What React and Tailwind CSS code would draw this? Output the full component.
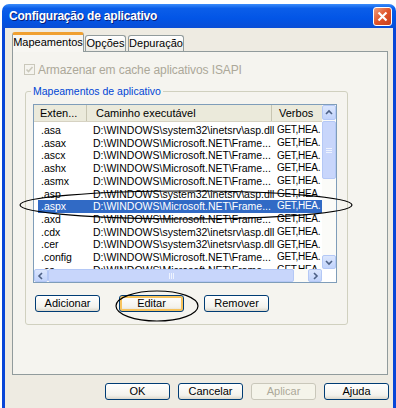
import { useState } from "react";

const MS = "D:\\WINDOWS\\Microsoft.NET\\Frame...";
const SYS = "D:\\WINDOWS\\system32\\inetsrv\\asp.dll";

const rows = [
  [".asa", SYS],
  [".asax", MS],
  [".ascx", MS],
  [".ashx", MS],
  [".asmx", MS],
  [".asp", SYS],
  [".aspx", MS],
  [".axd", MS],
  [".cdx", SYS],
  [".cer", SYS],
  [".config", MS],
  [".cs", MS],
];

const Arrow = ({ dir }) => {
  const d = {
    up: "M2 6 L5 3 L8 6",
    down: "M2 4 L5 7 L8 4",
    left: "M6 2 L3 5 L6 8",
    right: "M4 2 L7 5 L4 8",
  }[dir];
  return (
    <svg width="10" height="10" viewBox="0 0 10 10">
      <path d={d} fill="none" stroke="#4d6185" strokeWidth="1.6" />
    </svg>
  );
};

const ScrollBtn = ({ dir, className = "" }) => (
  <div
    className={`flex items-center justify-center rounded-[2px] border border-[#b4c8f6] bg-[linear-gradient(#dbe6fd,#c1d3fb)] ${className}`}
  >
    <Arrow dir={dir} />
  </div>
);

const XpButton = ({ label, focused, disabled, className = "" }) => (
  <button
    className={`h-[17px] w-[65px] rounded-[3px] border text-[11px] leading-none ${
      disabled
        ? "border-[#c9c7ba] bg-[#f5f4ea] text-[#aca899]"
        : "border-[#003c74] bg-[linear-gradient(#ffffff,#f3f2ec_75%,#dcd8cc)] text-black"
    } ${focused ? "shadow-[inset_0_0_0_2px_#f7c35c]" : ""} ${className}`}
  >
    {label}
  </button>
);

const ListView = () => {
  const [selected] = useState(6);
  return (
    <div className="flex h-[179px] w-[304px] flex-col border border-[#7f9db9] bg-white">
      <div className="flex h-[164px]">
        <div className="flex w-[288px] flex-col overflow-hidden">
          <div className="flex h-[17px] shrink-0 items-center border-b border-[#d6d2c2] bg-[#ebeadb]">
            <div className="flex h-full w-[53px] items-center border-r border-[#c7c5b2] pl-[6px]">
              Exten...
            </div>
            <div className="flex h-full w-[185px] items-center border-r border-[#c7c5b2] pl-[9px]">
              Caminho executável
            </div>
            <div className="flex h-full w-[50px] items-center pl-[7px]">Verbos</div>
          </div>
          <div className="pt-[2px] text-[10.5px]">
            {rows.map(([ext, path], i) => (
              <div key={ext} className="flex h-[12.7px] items-center">
                <div
                  className={`ml-[4px] flex h-full flex-1 items-center ${
                    i === selected ? "bg-[#316ac5] text-white" : ""
                  }`}
                >
                  <span className="w-[49px] pl-[3px]">{ext}</span>
                  <span className="w-[185px] pl-[6px] whitespace-nowrap">{path}</span>
                  <span className="pl-[5px] text-[10px] tracking-[-0.3px] whitespace-nowrap">GET,HEA.</span>
                </div>
              </div>
            ))}
          </div>
        </div>
        <div className="flex w-[14px] flex-col bg-[#fbfbf8]">
          <ScrollBtn dir="up" className="h-[15px]" />
          <div className="mt-[1px] flex h-[58px] items-center justify-center rounded-[2px] border border-[#b4c8f6] bg-[#c8d6fb]">
            <div className="flex flex-col gap-[1px]">
              <div className="h-px w-[6px] bg-[#eef3fe]" />
              <div className="h-px w-[6px] bg-[#eef3fe]" />
              <div className="h-px w-[6px] bg-[#eef3fe]" />
            </div>
          </div>
          <div className="flex-1" />
          <ScrollBtn dir="down" className="h-[14px]" />
        </div>
      </div>
      <div className="flex h-[13px]">
        <div className="flex w-[288px] bg-[#fbfbf8]">
          <ScrollBtn dir="left" className="w-[14px]" />
          <div className="flex w-[246px] items-center justify-center rounded-[2px] border border-[#b4c8f6] bg-[#c8d6fb]">
            <div className="flex gap-[1px]">
              <div className="h-[6px] w-px bg-[#eef3fe]" />
              <div className="h-[6px] w-px bg-[#eef3fe]" />
              <div className="h-[6px] w-px bg-[#eef3fe]" />
            </div>
          </div>
          <div className="flex-1" />
          <ScrollBtn dir="right" className="w-[14px]" />
        </div>
        <div className="w-[14px] bg-white" />
      </div>
    </div>
  );
};

export default function App() {
  return (
    <div className="relative h-[408px] w-[396px] overflow-hidden bg-white font-['Liberation_Sans',Arial,sans-serif] text-[11px] leading-none text-black">
      <div className="ml-[2px] mt-[4px] flex h-[404px] w-[394px] flex-col">
        {/* title bar */}
        <div className="flex h-[24px] shrink-0 items-center justify-between rounded-t-[7px] bg-[linear-gradient(#3a8cfb,#0b5ee9_18%,#0255e6_60%,#0a4ed6)] pl-[7px] pr-[4px]">
          <span className="text-[12px] font-bold tracking-[-0.2px] text-white [text-shadow:1px_1px_#0a1e7a]">
            Configuração de aplicativo
          </span>
          <div className="flex h-[19px] w-[19px] items-center justify-center rounded-[3px] border border-white bg-[linear-gradient(135deg,#f0a07e,#e0542a_50%,#c8401c)]">
            <svg width="11" height="11" viewBox="0 0 11 11">
              <path d="M1.5 1.5 L9.5 9.5 M9.5 1.5 L1.5 9.5" stroke="white" strokeWidth="2.2" />
            </svg>
          </div>
        </div>

        {/* body */}
        <div className="flex flex-1 flex-col border-x-[3px] border-[#0846d8] bg-[#eeebe2]">
          <div className="ml-[7px] mt-[4px] flex items-end">
            <div className="relative z-10 -mb-px flex h-[20px] w-[72px] items-center justify-center rounded-t-[3px] border-x border-t-[3px] border-x-[#919b9c] border-t-[#f0a030] bg-[#f7f6f2] pb-[2px]">
              Mapeamentos
            </div>
            <div className="ml-px flex h-[16px] w-[41px] items-center justify-center rounded-t-[3px] border-x border-t border-[#919b9c] bg-[linear-gradient(#ffffff,#ecebe5)]">
              Opções
            </div>
            <div className="ml-[2px] flex h-[16px] w-[56px] items-center justify-center rounded-t-[3px] border-x border-t border-[#919b9c] bg-[linear-gradient(#ffffff,#ecebe5)]">
              Depuração
            </div>
          </div>

          {/* tab panel */}
          <div className="ml-[7px] flex h-[324px] w-[376px] flex-col border border-[#919b9c] bg-[#f5f4ef]">
            <div className="ml-[11px] mt-[12px] flex h-[11px] items-center">
              <div className="flex h-[11px] w-[11px] items-center justify-center border border-[#cac8bb] bg-[#f5f4ef]">
                <svg width="9" height="9" viewBox="0 0 9 9">
                  <path d="M1.5 4.5 L3.5 6.5 L7.5 2" fill="none" stroke="#cac8bb" strokeWidth="1.6" />
                </svg>
              </div>
              <span className="ml-[3px] text-[12px] tracking-[-0.1px] text-[#aca899]">
                Armazenar em cache aplicativos ISAPI
              </span>
            </div>

            <fieldset className="ml-[12px] mt-[10px] h-[240px] w-[323px] rounded-[3px] border border-[#d0d0bf]">
              <legend className="ml-[5px] px-[2px] text-[10.5px] leading-[13px] text-[#0046d5]">
                Mapeamentos de aplicativo
              </legend>
              <div className="ml-[7px] mt-[6px]">
                <ListView />
              </div>
              <div className="ml-[9px] mt-[12px] flex">
                <XpButton label="Adicionar" className="w-[64px]" />
                <XpButton label="Editar" focused className="ml-[19px] w-[64px]" />
                <XpButton label="Remover" className="ml-[20px] w-[64px]" />
              </div>
            </fieldset>
          </div>

          <div className="mt-[8px] flex justify-end gap-[8px] pr-[4px]">
            <XpButton label="OK" />
            <XpButton label="Cancelar" />
            <XpButton label="Aplicar" disabled />
            <XpButton label="Ajuda" />
          </div>
        </div>
      </div>

      {/* hand-drawn annotation marks */}
      <svg className="pointer-events-none absolute left-0 top-0" width="396" height="408">
        <ellipse cx="186" cy="205" rx="166" ry="14" fill="none" stroke="#000" strokeWidth="1.2" />
        <ellipse cx="157" cy="306" rx="41" ry="15" fill="none" stroke="#000" strokeWidth="1.2" />
      </svg>
    </div>
  );
}
